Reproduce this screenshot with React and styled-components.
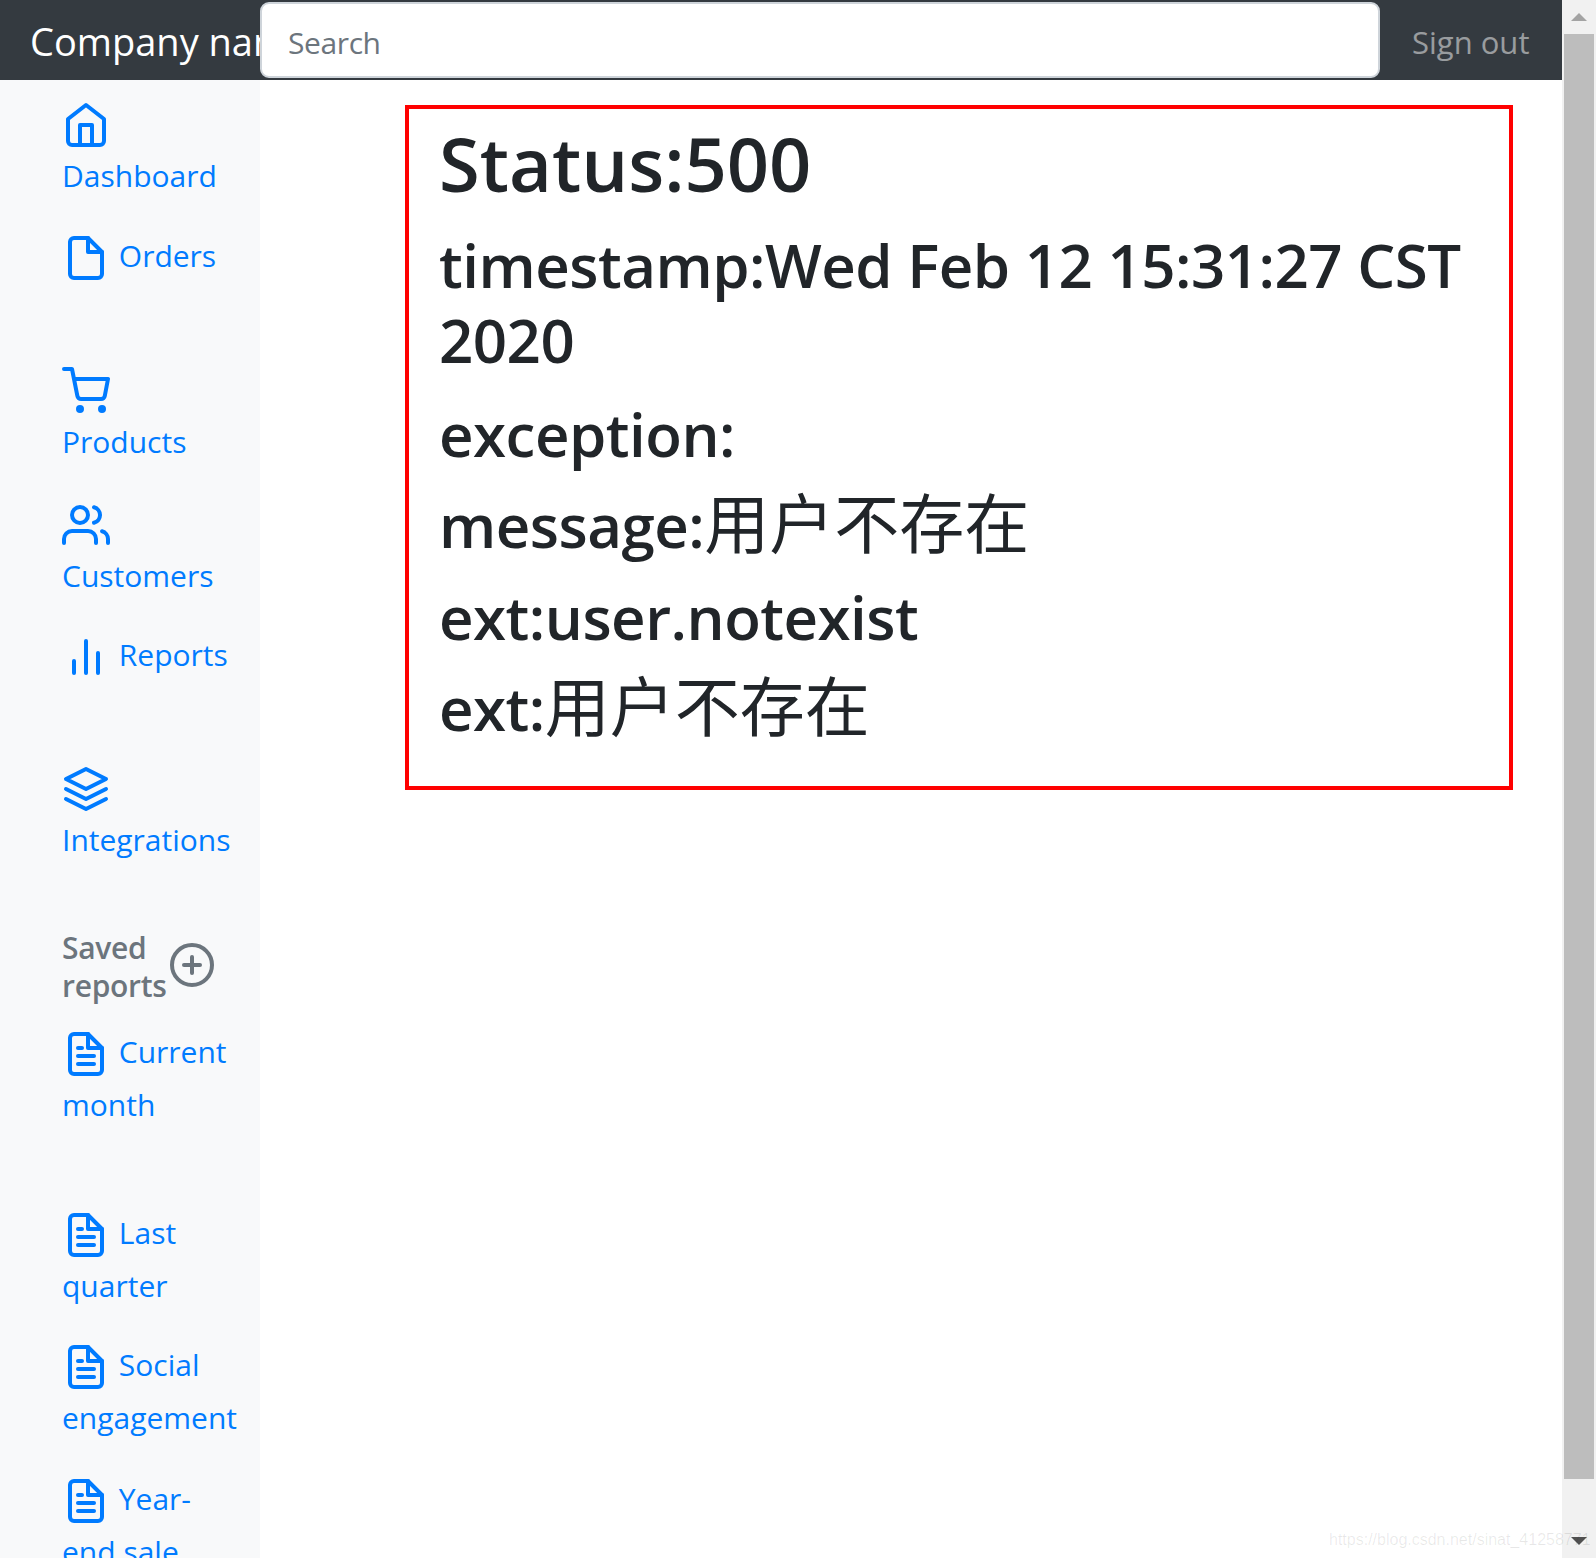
import React from "react";
import styled, { createGlobalStyle } from "styled-components";

const GlobalStyle = createGlobalStyle`
  html, body {
    margin: 0;
    padding: 0;
    background: #fff;
    overflow: hidden;
  }
  * {
    box-sizing: border-box;
  }
`;

const FONT = `"Open Sans", "Noto Sans CJK SC", sans-serif`;

const Shell = styled.div`
  display: flex;
  position: relative;
  width: 1596px;
  height: 1558px;
  overflow: hidden;
  font-family: ${FONT};
`;
const Page = styled.div`
  width: 1562px;
  display: flex;
  flex-direction: column;
`;
const Navbar = styled.header`
  height: 80px;
  flex: none;
  display: flex;
  background: #343a40;
`;
const Brand = styled.div`
  width: 260px;
  flex: none;
  padding-left: 30px;
  overflow: hidden;
  white-space: nowrap;
  color: #fff;
  font-size: 38px;
  line-height: 82px;
`;
const SearchInput = styled.input`
  flex: 1;
  min-width: 0;
  height: 76px;
  margin-top: 2px;
  padding: 4px 26px 0;
  border: 2px solid #ced4da;
  border-radius: 9px;
  background: #fff;
  font-family: ${FONT};
  font-size: 30px;
  letter-spacing: -0.4px;
  outline: none;
  &::placeholder {
    color: #6c757d;
    opacity: 1;
  }
`;
const SignOut = styled.a`
  width: 182px;
  flex: none;
  padding-left: 32px;
  color: rgba(255, 255, 255, 0.5);
  font-size: 31px;
  line-height: 84px;
`;
const Body = styled.div`
  flex: 1;
  display: flex;
  min-height: 0;
`;
const Sidebar = styled.nav`
  width: 260px;
  flex: none;
  padding: 16px 24px 0 62px;
  background: #f8f9fa;
  overflow: hidden;
`;
const NavLink = styled.a`
  display: block;
  margin-bottom: ${(p) => p.$gap}px;
  color: #007bff;
  font-size: 30px;
  line-height: 53px;
`;
const Icon = styled.svg`
  width: 48px;
  height: 48px;
  margin-right: 1px;
  vertical-align: -15px;
  fill: none;
  stroke: currentColor;
  stroke-width: 2;
  stroke-linecap: round;
  stroke-linejoin: round;
`;
const SavedHeader = styled.div`
  display: flex;
  align-items: center;
  margin-bottom: 20px;
  color: #6c757d;
  font-size: 30px;
  font-weight: 600;
  line-height: 38px;
`;
const SavedTitle = styled.span`
  width: 106px;
  letter-spacing: -0.3px;
`;
const PlusIcon = styled(Icon)`
  margin: -5px 0 0;
  flex: none;
`;
const Main = styled.main`
  flex: 1;
  padding: 25px 49px 0 145px;
`;
const ErrorBox = styled.section`
  height: 685px;
  padding: 13px 28px 0 30px;
  border: 4px solid #f00;
  color: #212529;
`;
const Status = styled.h2`
  margin: 0 0 22px;
  font-size: 74px;
  font-weight: 600;
  line-height: 84px;
`;
const Line = styled.h3`
  margin: 0 0 16.5px;
  font-size: 60px;
  font-weight: 600;
  line-height: 75px;
  letter-spacing: -0.5px;
  &:first-of-type {
    margin-bottom: 18.5px;
  }
`;
const Cjk = styled.span`
  font-size: 65px;
  font-weight: 400;
  line-height: 1;
  letter-spacing: 0;
`;
const Scrollbar = styled.aside`
  position: relative;
  width: 34px;
  flex: none;
  display: flex;
  flex-direction: column;
  align-items: center;
  background: #f1f1f1;
`;
const Arrow = styled.div`
  height: 34px;
  flex: none;
  display: flex;
  align-items: center;
  justify-content: center;
`;
const ArrowGlyph = styled.div`
  width: 0;
  height: 0;
  border-left: 8px solid transparent;
  border-right: 8px solid transparent;
  border-${(p) => (p.$down ? "top" : "bottom")}: 8px solid ${(p) => (p.$down ? "#505050" : "#a3a3a3")};
`;
const Thumb = styled.div`
  width: 30px;
  height: 1445px;
  flex: none;
  background: #bdbdbd;
`;
const Track = styled.div`
  flex: 1;
`;
const Watermark = styled.div`
  position: absolute;
  left: 1329px;
  top: 1530px;
  color: rgba(0, 0, 0, 0.09);
  font-family: "Liberation Sans", sans-serif;
  font-size: 16px;
  line-height: 20px;
  white-space: nowrap;
`;

const FILE = "M13 2H6a2 2 0 0 0-2 2v16a2 2 0 0 0 2 2h12a2 2 0 0 0 2-2V9z";

const icons = {
  home: (
    <>
      <path d="M3 9l9-7 9 7v11a2 2 0 0 1-2 2H5a2 2 0 0 1-2-2z" />
      <polyline points="9 22 9 12 15 12 15 22" />
    </>
  ),
  file: (
    <>
      <path d={FILE} />
      <polyline points="13 2 13 9 20 9" />
    </>
  ),
  cart: (
    <>
      <circle cx="9" cy="21" r="1" />
      <circle cx="20" cy="21" r="1" />
      <path d="M1 1h4l2.68 13.39a2 2 0 0 0 2 1.61h9.72a2 2 0 0 0 2-1.61L23 6H6" />
    </>
  ),
  users: (
    <>
      <path d="M17 21v-2a4 4 0 0 0-4-4H5a4 4 0 0 0-4 4v2" />
      <circle cx="9" cy="7" r="4" />
      <path d="M23 21v-2a4 4 0 0 0-3-3.87" />
      <path d="M16 3.13a4 4 0 0 1 0 7.75" />
    </>
  ),
  bars: (
    <>
      <line x1="18" y1="20" x2="18" y2="10" />
      <line x1="12" y1="20" x2="12" y2="4" />
      <line x1="6" y1="20" x2="6" y2="14" />
    </>
  ),
  layers: (
    <>
      <polygon points="12 2 2 7 12 12 22 7 12 2" />
      <polyline points="2 17 12 22 22 17" />
      <polyline points="2 12 12 17 22 12" />
    </>
  ),
  text: (
    <>
      <path d={FILE} />
      <polyline points="13 2 13 9 20 9" />
      <line x1="16" y1="13" x2="8" y2="13" />
      <line x1="16" y1="17" x2="8" y2="17" />
      <polyline points="10 9 9 9 8 9" />
    </>
  ),
  plus: (
    <>
      <circle cx="12" cy="12" r="10" />
      <line x1="12" y1="8" x2="12" y2="16" />
      <line x1="8" y1="12" x2="16" y2="12" />
    </>
  ),
};

const mainLinks = [
  { icon: "home", label: "Dashboard", gap: 27 },
  { icon: "file", label: "Orders", gap: 80 },
  { icon: "cart", label: "Products", gap: 28 },
  { icon: "users", label: "Customers", gap: 26 },
  { icon: "bars", label: "Reports", gap: 79 },
  { icon: "layers", label: "Integrations", gap: 63 },
];

const savedLinks = [
  { label: "Current month", gap: 75 },
  { label: "Last quarter", gap: 26 },
  { label: "Social engagement", gap: 28 },
  { label: "Year-end sale", gap: 0 },
];

const lines = [
  { text: "timestamp:Wed Feb 12 15:31:27 CST 2020" },
  { text: "exception:" },
  { text: "message:", cjk: "用户不存在" },
  { text: "ext:user.notexist" },
  { text: "ext:", cjk: "用户不存在" },
];

export default function App() {
  return (
    <Shell>
      <GlobalStyle />
      <Page>
        <Navbar>
          <Brand>Company name</Brand>
          <SearchInput placeholder="Search" />
          <SignOut>Sign out</SignOut>
        </Navbar>
        <Body>
          <Sidebar>
            {mainLinks.map((link) => (
              <NavLink key={link.label} $gap={link.gap}>
                <Icon viewBox="0 0 24 24">{icons[link.icon]}</Icon> {link.label}
              </NavLink>
            ))}
            <SavedHeader>
              <SavedTitle>Saved reports</SavedTitle>
              <PlusIcon viewBox="0 0 24 24">{icons.plus}</PlusIcon>
            </SavedHeader>
            {savedLinks.map((link) => (
              <NavLink key={link.label} $gap={link.gap}>
                <Icon viewBox="0 0 24 24">{icons.text}</Icon> {link.label}
              </NavLink>
            ))}
          </Sidebar>
          <Main>
            <ErrorBox>
              <Status>Status:500</Status>
              {lines.map((line) => (
                <Line key={line.text + line.cjk}>
                  {line.text}
                  {line.cjk && <Cjk>{line.cjk}</Cjk>}
                </Line>
              ))}
            </ErrorBox>
          </Main>
        </Body>
      </Page>
      <Scrollbar>
        <Arrow>
          <ArrowGlyph />
        </Arrow>
        <Thumb />
        <Track />
        <Arrow>
          <ArrowGlyph $down />
        </Arrow>
      </Scrollbar>
      <Watermark>https://blog.csdn.net/sinat_41258771</Watermark>
    </Shell>
  );
}
